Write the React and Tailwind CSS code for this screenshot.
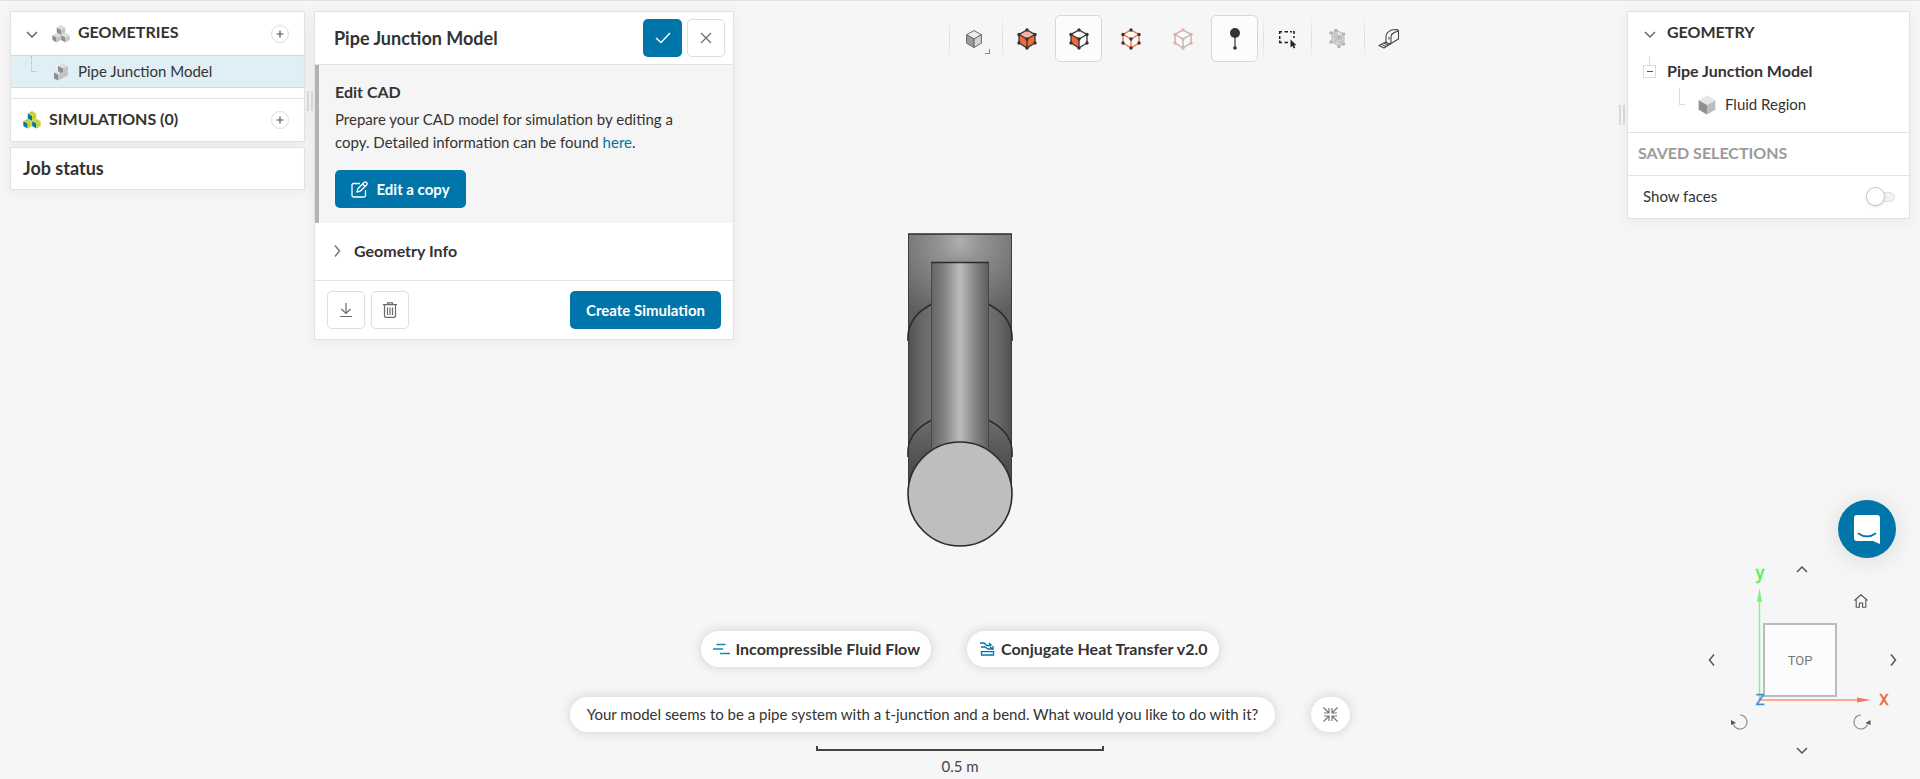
import { useState } from "react";
import clsx from "clsx";

const CARD =
  "bg-white border border-[#e2e2e2] shadow-[0_2px_14px_rgba(0,0,0,0.06)]";
const PRIMARY =
  "flex h-[38px] items-center justify-center rounded-[5px] bg-[#0075a9] text-white";
const OUTLINE =
  "flex h-[38px] w-[38px] items-center justify-center rounded-[5px] border border-[#dedede] bg-white text-[#6b6b6b]";
const HEADING = "pb-[3px] text-base font-bold";

function Chevron({ dir = "down", className }) {
  const d = {
    down: "M1 4l5 5 5-5",
    up: "M1 8l5-5 5 5",
    left: "M8 0.5L3.5 6 8 11.5",
    right: "M4 0.5L8.5 6 4 11.5",
  }[dir];
  return (
    <svg className={className} width="12" height="12" viewBox="0 0 12 12" fill="none" stroke="currentColor" strokeWidth="1.5">
      <path d={d} />
    </svg>
  );
}

// isometric cube centred on x/y, r = distance to the upper corner
function IsoCube({ x, y, r, top, left, right, ...rest }) {
  const w = r * 0.87;
  const h = r / 2;
  return (
    <g {...rest} strokeLinejoin="round">
      <path fill={top} d={`M${x} ${y - r}L${x + w} ${y - h}L${x} ${y}L${x - w} ${y - h}Z`} />
      <path fill={left} d={`M${x - w} ${y - h}L${x} ${y}V${y + r}L${x - w} ${y + h}Z`} />
      <path fill={right} d={`M${x + w} ${y - h}L${x} ${y}V${y + r}L${x + w} ${y + h}Z`} />
    </g>
  );
}

function CubeStack({ colored }) {
  const c = colored
    ? { top: "#c4d22f", left: "#0075a9", right: "#c4d22f" }
    : { top: "#dcdcdc", left: "#8f8f8f", right: "#c6c6c6" };
  return (
    <svg width="18" height="18" viewBox="0 0 18 18">
      <IsoCube x={9} y={5} r={4.9} {...c} />
      <IsoCube x={4.6} y={12.6} r={4.9} {...c} />
      <IsoCube x={13.4} y={12.6} r={4.9} {...c} />
    </svg>
  );
}

function PartIcon() {
  return (
    <svg width="16" height="18" viewBox="0 0 16 18">
      <path fill="#dedede" d="M5 3l5-2.5L15 3l-5 2.5zM1 9.500l4-2 3 1.500-4 2z" />
      <path fill="#8d8d8d" d="M5 3l5 2.500v4L8 10.500 5 8zM1 9.500l4 2v6l-4-2z" />
      <path fill="#c3c3c3" d="M10 5.500L15 3v9.500L5 17.500v-6l5-2.500z" />
    </svg>
  );
}

function NodeCube({ faces = {}, line, edge, node, size = 22 }) {
  const pts = [[11, 2], [19, 6.5], [19, 15], [11, 20], [3, 15], [3, 6.5], [11, 11]];
  return (
    <svg width={size} height={size} viewBox="0 0 22 22">
      <path fill={faces.top || "#fafafa"} d="M11 2l8 4.500-8 4.500-8-4.500z" />
      <path fill={faces.left || "#fafafa"} d="M3 6.500l8 4.500v9l-8-5z" />
      <path fill={faces.right || "#fafafa"} d="M19 6.500l-8 4.500v9l8-5z" />
      <path fill="none" stroke={line} strokeWidth="1.300" strokeDasharray={edge} d="M11 2l8 4.500V15l-8 5-8-5V6.500zM3 6.500l8 4.500 8-4.500M11 11v9" />
      {pts.map(([x, y]) => (
        <circle key={`${x}-${y}`} cx={x} cy={y} r="1.700" fill={node} />
      ))}
    </svg>
  );
}

function MeshCube() {
  return (
    <svg width="20" height="22" viewBox="0 0 20 22" stroke="#b9b9b9" fill="none">
      <path fill="#e4e4e4" d="M4 5l5-2.500 7 4v9L11 18l-7-4z" />
      <path d="M4 5l7 4 5-2.500M11 9v9M4 8l7 4 5-2.500M4 11l7 4 5-2.500M7 3.500v12M13.500 8v9M9 2.500v11" />
      <g fill="#b4b4b4" stroke="none">
        <circle cx="3" cy="5" r="1.800" />
        <circle cx="8" cy="2.500" r="1.800" />
        <circle cx="15.500" cy="6" r="1.800" />
        <circle cx="11" cy="9" r="1.800" />
        <circle cx="3" cy="14" r="1.800" />
        <circle cx="11" cy="18.500" r="1.800" />
        <circle cx="15.500" cy="16" r="1.800" />
      </g>
    </svg>
  );
}

function ProbeIcon() {
  return (
    <svg width="12" height="24" viewBox="0 0 12 24" fill="#333">
      <circle cx="6" cy="6" r="5" />
      <circle cx="6" cy="21" r="1.800" />
      <path d="M5.400 10h1.200v10H5.400z" />
    </svg>
  );
}

function BoxSelectIcon() {
  return (
    <svg width="20" height="20" viewBox="0 0 20 20">
      <path d="M1.700 5V2.700H4M6.500 2.700h3.500M12 2.700h2M16 5V2.700h-1M1.700 7v3M1.700 11.500v2H4M6.500 13.500h3.500M16 7v2" fill="none" stroke="#222" strokeWidth="1.500" />
      <path d="M12.500 10.500v8l2-1.700 1.200 2.700 1.500-.7-1.200-2.600h2.500z" fill="#222" />
    </svg>
  );
}

function TapeIcon() {
  return (
    <svg width="22" height="22" viewBox="0 0 22 22" fill="none" stroke="#444" strokeWidth="1.100" strokeLinejoin="round">
      <path d="M8 14V8.500C8 5 10 3.500 13.500 2l5.500-.5 1.500 1.500v8L13 15.500" />
      <path d="M13 15.500V8.500c0-2.500 2-3.500 7-5.500M8 14c1.500 1.500 3 2 5 1.500M11 11.500V9" />
      <path d="M8 14L1 17.500 6 20l7-4.500M3.500 16.300l5 2.400M6 15l4.500 2.300" />
    </svg>
  );
}

function ShadedCube({ size = 18 }) {
  return (
    <svg width={size} height={size} viewBox="0 0 18 18">
      <IsoCube x={9} y={9} r={8.5} top="#ececec" left="#9c9c9c" right="#d2d2d2" stroke="#6a6a6a" strokeWidth="1" />
    </svg>
  );
}

const DARK = "#333";
const ORANGE = "#ee6b3d";

const SELECT_MODES = [
  { id: "volumes", icon: <NodeCube faces={{ top: "#f6b3a6", left: ORANGE, right: ORANGE }} line={DARK} node={DARK} /> },
  { id: "faces", icon: <NodeCube faces={{ left: ORANGE }} line={DARK} node={DARK} /> },
  { id: "edges", icon: <NodeCube line={ORANGE} node={DARK} /> },
  { id: "nodes", icon: <NodeCube line="#b0b0b0" node="#f9a89d" /> },
];

function ToolButton({ label, active, className, ...props }) {
  return (
    <button
      aria-label={label}
      aria-pressed={active}
      className={clsx(
        "flex h-[47px] shrink-0 items-center justify-center rounded-[5px] pt-px",
        className || "w-[47px]",
        active && "border border-[#c3dfea] bg-[#fcfcfc]",
      )}
      {...props}
    />
  );
}

function ToolDivider() {
  return (
    <span className="h-[47px] w-px shrink-0 bg-linear-to-b from-transparent via-[#dcdcdc] to-transparent" />
  );
}

function Toolbar() {
  const [mode, setMode] = useState("faces");
  const [probe, setProbe] = useState(true);

  return (
    <div role="toolbar" aria-label="View tools" className="mt-1 flex items-center">
      <ToolDivider />
      <ToolButton label="Render mode" className="relative w-[52px] pr-1">
        <ShadedCube />
        <span className="absolute right-3 bottom-2 h-[5px] w-[5px] border-r border-b border-[#888]" />
      </ToolButton>
      <ToolDivider />
      <div className="flex gap-[5px] pr-[5px]">
        {SELECT_MODES.map((m) => (
          <ToolButton key={m.id} label={`Select ${m.id}`} active={mode === m.id} onClick={() => setMode(m.id)}>
            {m.icon}
          </ToolButton>
        ))}
        <ToolButton label="Probe" active={probe} onClick={() => setProbe((v) => !v)}>
          <ProbeIcon />
        </ToolButton>
      </div>
      <ToolDivider />
      <ToolButton label="Box select">
        <BoxSelectIcon />
      </ToolButton>
      <ToolDivider />
      <ToolButton label="Mesh" className="w-[52px]">
        <MeshCube />
      </ToolButton>
      <ToolDivider />
      <ToolButton label="Measure">
        <TapeIcon />
      </ToolButton>
    </div>
  );
}

function AddButton({ label }) {
  return (
    <button aria-label={label} className="ml-auto flex h-[18px] w-[18px] items-center justify-center rounded-full border border-[#dcdcdc] bg-white">
      <svg width="8" height="8" viewBox="0 0 8 8" stroke="#555" strokeWidth="1.200">
        <path d="M4 0.500v7M0.500 4h7" />
      </svg>
    </button>
  );
}

function DragHandle() {
  return (
    <div className="mt-20 flex h-5 shrink-0 gap-[2px]">
      <span className="w-[2px] bg-[#dadada]" />
      <span className="w-[2px] bg-[#dadada]" />
    </div>
  );
}

function Sidebar() {
  return (
    <aside className="w-[295px] shrink-0 space-y-[5px]">
      <nav className={CARD}>
        <div className="flex h-[43px] items-center px-[15px]">
          <Chevron className="mr-[14px] text-[#666]" />
          <CubeStack />
          <h2 className={clsx(HEADING, "ml-2")}>GEOMETRIES</h2>
          <AddButton label="Add geometry" />
        </div>
        <a href="#geometry" className="flex h-[33px] items-center border-y border-[#c3dde9] bg-[#e0eef5] pl-5">
          <span className="mr-4 mb-4 h-4 w-[6px] border-b border-l border-dotted border-[#aab8be]" />
          <PartIcon />
          <span className="ml-[9px] pb-px">Pipe Junction Model</span>
        </a>
        <div className="mt-[10px] flex h-[43px] items-center border-t border-[#e2e2e2] pr-[15px] pl-3">
          <CubeStack colored />
          <h2 className={clsx(HEADING, "ml-2")}>SIMULATIONS (0)</h2>
          <AddButton label="Add simulation" />
        </div>
      </nav>
      <div className={clsx(CARD, "flex h-[43px] items-center px-3")}>
        <h2 className="pb-0.5 text-lg font-bold">Job status</h2>
      </div>
    </aside>
  );
}

function GeometryPanel() {
  return (
    <section className={clsx(CARD, "w-[420px] shrink-0 self-start")}>
      <header className="flex h-[53px] items-center gap-[5px] border-b border-[#e2e2e2] pr-2 pl-[19px]">
        <h1 className="mr-auto text-lg font-bold">Pipe Junction Model</h1>
        <button aria-label="Apply" className={clsx(PRIMARY, "w-[39px]")}>
          <svg width="16" height="12" viewBox="0 0 16 12" fill="none" stroke="currentColor" strokeWidth="1.400">
            <path d="M1 6l5 4.500L15 1" />
          </svg>
        </button>
        <button aria-label="Close" className={OUTLINE}>
          <svg width="12" height="12" viewBox="0 0 12 12" stroke="currentColor" strokeWidth="1.200">
            <path d="M1 1l10 10M11 1L1 11" />
          </svg>
        </button>
      </header>

      <div className="border-l-4 border-[#b0b4b4] bg-[#f5f5f5] px-4 py-[15px]">
        <h3 className="text-base leading-6 font-bold">Edit CAD</h3>
        <p className="mt-1 leading-[23px]">
          Prepare your CAD model for simulation by editing a
          <br />
          copy. Detailed information can be found{" "}
          <a href="#docs" className="text-[#0075a9]">here</a>.
        </p>
        <button className={clsx(PRIMARY, "mt-4 w-[131px] gap-2 font-bold")}>
          <svg width="17" height="17" viewBox="0 0 17 17" fill="none" stroke="currentColor" strokeWidth="1.300" strokeLinejoin="round">
            <path d="M9 2.500H2.500a1.500 1.500 0 0 0-1.500 1.500v10.500A1.500 1.500 0 0 0 2.500 16H13a1.500 1.500 0 0 0 1.500-1.500V9" />
            <path d="M6 11l.8-3.200L13 1.500a1.500 1.500 0 0 1 2.500 2.500L9.200 10.200zM11.500 3l2.500 2.500" />
          </svg>
          Edit a copy
        </button>
      </div>

      <button className="flex h-[57px] w-full items-center gap-[11px] pb-0.5 pl-4 text-base font-bold">
        <Chevron dir="right" className="text-[#777]" />
        Geometry Info
      </button>

      <footer className="flex items-center gap-[6px] border-t border-[#e2e2e2] px-3 py-[10px]">
        <button aria-label="Download" className={OUTLINE}>
          <svg width="14" height="16" viewBox="0 0 14 16" fill="none" stroke="currentColor" strokeWidth="1.200">
            <path d="M7 1v10.500M2.500 7L7 11.500 11.500 7M1 14.500h12" />
          </svg>
        </button>
        <button aria-label="Delete" className={OUTLINE}>
          <svg width="14" height="16" viewBox="0 0 14 16" fill="none" stroke="currentColor" strokeWidth="1.200">
            <path d="M0 2.600h14M4.500 2.500V.8h5v1.700M1.500 3v11a1.300 1.300 0 0 0 1.300 1.300h8.400a1.300 1.300 0 0 0 1.300-1.300V3M4.500 5.500v7.500M7 5.500v7.500M9.500 5.500v7.500" />
          </svg>
        </button>
        <button className={clsx(PRIMARY, "ml-auto w-[151px] font-bold")}>
          Create Simulation
        </button>
      </footer>
    </section>
  );
}

function SceneTree() {
  const [showFaces, setShowFaces] = useState(false);

  return (
    <section className={CARD}>
      <div className="h-[120px]">
        <div className="flex h-[43px] items-center gap-[11px] pl-4">
          <Chevron className="text-[#666]" />
          <h2 className={HEADING}>GEOMETRY</h2>
        </div>
        <div className="flex h-[33px] items-center gap-[11px] pl-[15px]">
          <button aria-label="Collapse" className="relative flex h-[13px] w-[13px] items-center justify-center border border-[#dcdcdc]">
            <span className="h-px w-[6px] bg-[#555]" />
            <span className="absolute bottom-3 h-[9px] w-px bg-[#dcdcdc]" />
          </button>
          <span className="pb-px text-base font-bold">Pipe Junction Model</span>
        </div>
        <div className="flex h-[33px] items-center pl-[51px]">
          <span className="mr-[13px] mb-4 h-[17px] w-[6px] border-b border-l border-[#dcdcdc]" />
          <svg width="18" height="20" viewBox="0 0 18 20">
            <IsoCube x={9} y={10} r={9.6} top="#e6e6e6" left="#909090" right="#bdbdbd" />
          </svg>
          <span className="ml-[9px] pb-px">Fluid Region</span>
        </div>
      </div>
      <div className="flex h-[43px] items-center border-t border-[#e2e2e2] pl-[10px] text-[#9b9b9b]">
        <h2 className={HEADING}>SAVED SELECTIONS</h2>
      </div>
      <label className="flex h-[43px] items-center justify-between border-t border-[#e2e2e2] pr-[14px] pb-px pl-[15px]">
        Show faces
        <span className="relative flex h-[18px] w-[29px] items-center">
          <input
            type="checkbox"
            role="switch"
            checked={showFaces}
            onChange={(e) => setShowFaces(e.target.checked)}
            className="ml-auto h-[10px] w-6 appearance-none rounded-full border border-[#e0e0e0] bg-[#f2f2f2]"
          />
          <span
            className={clsx(
              "pointer-events-none absolute h-[19px] w-[19px] rounded-full border border-[#c8c8c8] bg-white shadow-sm",
              showFaces ? "right-0" : "left-0",
            )}
          />
        </span>
      </label>
    </section>
  );
}

function PipeModel() {
  return (
    <svg width="106" height="314" viewBox="0 0 106 314" role="img" aria-label="Pipe Junction Model">
      <defs>
        <linearGradient id="outer" x1="0" x2="1">
          <stop offset="0" stopColor="#505050" />
          <stop offset="0.120" stopColor="#666" />
          <stop offset="0.500" stopColor="#8c8c8c" />
          <stop offset="0.880" stopColor="#666" />
          <stop offset="1" stopColor="#505050" />
        </linearGradient>
        <radialGradient id="bend" gradientUnits="userSpaceOnUse" cx="53" cy="8" r="85">
          <stop offset="0" stopColor="#adb0af" />
          <stop offset="0.250" stopColor="#939393" />
          <stop offset="0.600" stopColor="#7a7a7a" />
          <stop offset="1" stopColor="#5c5c5c" />
        </radialGradient>
        <linearGradient id="inner" x1="0" x2="1">
          <stop offset="0" stopColor="#636363" />
          <stop offset="0.250" stopColor="#868686" />
          <stop offset="0.500" stopColor="#bcbcbc" />
          <stop offset="0.750" stopColor="#868686" />
          <stop offset="1" stopColor="#5c5c5c" />
        </linearGradient>
        <linearGradient id="elbow" x1="0" x2="0" y1="0" y2="1">
          <stop offset="0" stopColor="#707070" />
          <stop offset="1" stopColor="#3c3c3c" />
        </linearGradient>
      </defs>
      <path d="M1 1h104v260H1z" fill="url(#outer)" />
      <path d="M1 1h104v103a52 39 0 0 0-104 0z" fill="url(#bend)" />
      <path d="M1 219a52 38 0 0 1 104 0v42H1z" fill="url(#elbow)" />
      <path d="M1.500 1v260M104.500 1v260" stroke="#3d3d3d" />
      <g fill="none" stroke="#2b2b2b" strokeWidth="1.600">
        <path d="M1 1h104M1 108v-4a52 39 0 0 1 104 0v4M1 224v-5a52 38 0 0 1 104 0v5" />
        <path d="M24 29h58v200H24z" fill="url(#inner)" stroke="none" />
        <path d="M24.500 29v195M81.500 29v195" stroke="#484848" strokeWidth="1" />
        <path d="M24 29.500h58" />
        <circle cx="53" cy="261" r="52" fill="#bebebe" />
      </g>
    </svg>
  );
}

const PILL =
  "flex items-center justify-center rounded-full bg-white shadow-[0_0_12px_rgba(0,0,0,0.16)]";

function Assistant() {
  return (
    <div className="flex flex-col items-center">
      <div className="flex gap-9">
        <button className={clsx(PILL, "h-9 gap-[5px] px-[11px] pb-px text-base font-bold")}>
          <svg width="18" height="12" viewBox="0 0 18 12" stroke="#1a86b8" strokeWidth="1.300">
            <path d="M4.500 1.500h9M1 6h10M8 10.500h10" />
          </svg>
          Incompressible Fluid Flow
        </button>
        <button className={clsx(PILL, "h-9 gap-[6px] pr-[11px] pl-[13px] pb-px text-base font-bold")}>
          <svg width="15" height="14" viewBox="0 0 15 14" fill="none" stroke="#0075a9" strokeWidth="1.300">
            <path d="M0 1h4l3 2.500h4M9 1l2.500 2.500M1 5h4l3 2h5M10 5l3 2v-3M1.500 9.700h12V13h-12z" />
          </svg>
          Conjugate Heat Transfer v2.0
        </button>
      </div>
      <div className="mt-[30px] flex gap-9">
        <p className={clsx(PILL, "h-[35px] px-[17px] pb-px")}>
          Your model seems to be a pipe system with a t-junction and a bend.
          What would you like to do with it?
        </p>
        <button aria-label="Collapse suggestions" className={clsx(PILL, "h-[35px] w-[39px]")}>
          <svg width="15" height="15" viewBox="0 0 15 15" fill="none" stroke="#777" strokeWidth="1.200">
            <path d="M.5.5L6 6M6 1v5H1M14.500.5L9 6M9 1v5h5M.5 14.500L6 9M6 14V9H1M14.500 14.500L9 9M9 14V9h5" />
          </svg>
        </button>
      </div>
      <div className="mt-[14px] h-[5px] w-72 border-x-2 border-b-2 border-[#444]" />
      <span className="mt-1 mb-px leading-[23px] text-[#444]">0.5 m</span>
    </div>
  );
}

const VIEW_ARROWS = [
  { dir: "up", place: "left-[96px] top-[6px]" },
  { dir: "left", place: "left-[6px] top-[96px]" },
  { dir: "right", place: "left-[187px] top-[96px]" },
  { dir: "down", place: "left-[96px] top-[186px]" },
];

function ViewCube() {
  return (
    <div className="relative mr-[5px] h-[202px] w-[205px] text-[#555]">
      <svg width="205" height="202" viewBox="0 0 205 202" className="font-[Roboto,sans-serif]">
        <rect x="64" y="66" width="72" height="72" fill="#fcfcfc" stroke="#bbb" strokeWidth="2" />
        <text x="100" y="107" textAnchor="middle" fontSize="13" fill="#777">TOP</text>
        <path d="M59.500 142V42" stroke="#8ff08f" strokeWidth="1.500" />
        <path d="M59.500 30l2.500 14h-5z" fill="#7df07d" />
        <path d="M60 142h98" stroke="#ffa898" strokeWidth="2" />
        <path d="M171 142l-14 2.500v-5z" fill="#f07a64" />
        <g textAnchor="middle" strokeWidth="0.400">
          <text x="60" y="21" fontSize="19" fill="#55ee55" stroke="#55ee55">y</text>
          <text x="184" y="147" fontSize="15" fill="#f0603c" stroke="#f0603c">X</text>
          <text x="60" y="147" fontSize="15" fill="#3a93cc" stroke="#3a93cc">Z</text>
        </g>
      </svg>
      {VIEW_ARROWS.map((a) => (
        <button key={a.dir} aria-label={`Rotate ${a.dir}`} className={clsx("absolute", a.place)}>
          <Chevron dir={a.dir} />
        </button>
      ))}
      <button aria-label="Home view" className="absolute top-9 left-[154px]">
        <svg width="14" height="14" viewBox="0 0 14 14" fill="none" stroke="currentColor" strokeWidth="1.100">
          <path d="M.5 6.500L7 .8l6.500 5.700M2.200 5.500v7.800h3.200V9h3.200v4.300h3.200V5.500" />
        </svg>
      </button>
      <button aria-label="Roll left" className="absolute top-[156px] left-[30px]">
        <svg width="18" height="16" viewBox="0 0 18 16">
          <path d="M10 1a7 7 0 1 1-6.500 9.500" fill="none" stroke="#888" strokeWidth="1.100" />
          <path d="M1 6v5l5-2z" fill="#555" />
        </svg>
      </button>
      <button aria-label="Roll right" className="absolute top-[156px] left-[153px]">
        <svg width="18" height="16" viewBox="0 0 18 16">
          <path d="M8 1a7 7 0 1 0 6.500 9.500" fill="none" stroke="#888" strokeWidth="1.100" />
          <path d="M17.500 6v5l-5-2z" fill="#555" />
        </svg>
      </button>
    </div>
  );
}

function ChatButton() {
  return (
    <button aria-label="Open chat" className="mt-auto mr-[14px] flex h-[58px] w-[58px] shrink-0 items-center justify-center rounded-full bg-[#0075a9] shadow-[0_2px_24px_rgba(0,0,0,0.12)]">
      <svg width="26" height="30" viewBox="0 0 26 30">
        <path d="M3 1h20A3 3 0 0 1 26 4V30l-7-3H3A3 3 0 0 1 0 24v-20A3 3 0 0 1 3 1z" fill="#fff" />
        <path d="M4.500 19.500c5 3.800 12 3.800 17 0" fill="none" stroke="#0075a9" strokeWidth="1.600" strokeLinecap="round" />
      </svg>
    </button>
  );
}

export default function App() {
  return (
    <div className="grid min-h-screen grid-cols-1 bg-[#f6f6f6] font-[Lato,sans-serif] text-[15px] text-[#333]">
      {/* 3D scene */}
      <main className="col-start-1 row-start-1 place-self-center">
        <PipeModel />
      </main>
      <div className="col-start-1 row-start-1 self-end justify-self-center">
        <Assistant />
      </div>

      {/* Panels over the scene */}
      <div className="pointer-events-none col-start-1 row-start-1 flex border-t border-[#e2e2e2] px-[10px] pt-[10px] pb-[19px] *:pointer-events-auto">
        <Sidebar />
        <div className="flex w-[9px] shrink-0 justify-center">
          <DragHandle />
        </div>
        <GeometryPanel />
        <div className="flex flex-1 items-start justify-center">
          <Toolbar />
        </div>
        <div className="mt-[14px] mr-[2px] -ml-2">
          <DragHandle />
        </div>
        <aside className="flex w-[283px] shrink-0 flex-col items-end *:first:w-full">
          <SceneTree />
          <ChatButton />
          <ViewCube />
        </aside>
      </div>
    </div>
  );
}
